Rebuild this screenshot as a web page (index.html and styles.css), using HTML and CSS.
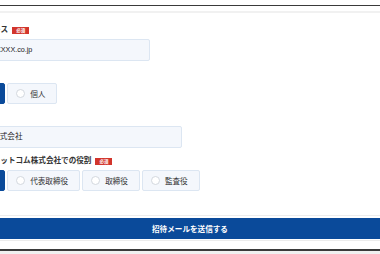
FILE: index.html
```html
<!DOCTYPE html>
<html lang="ja">
    <head>
        <meta charset="UTF-8">
        <link rel="stylesheet" href="styles.css">
    </head>
    <body>
        <div class="topbar"></div>
        <div class="panel">
            <!-- the form starts left of the window, so only part of it shows -->
            <form class="form" action="#">
                <div class="field">
                    <div class="label">メールアドレス<span class="badge">必須</span></div>
                    <div class="input email">XXXX.co.jp</div>
                </div>
                <div class="field">
                    <div class="label">区分</div>
                    <div class="choices">
                        <div class="choice selected"><span class="dot"></span>法人</div>
                        <div class="choice"><span class="dot"></span>個人</div>
                    </div>
                </div>
                <div class="field">
                    <div class="label">会社名</div>
                    <div class="input wide">サンプル株式会社</div>
                </div>
                <div class="field">
                    <div class="label">ネクスト・ドットコム株式会社での役割<span class="badge">必須</span></div>
                    <div class="choices">
                        <div class="choice selected"><span class="dot"></span>社員</div>
                        <div class="choice"><span class="dot"></span>代表取締役</div>
                        <div class="choice"><span class="dot"></span>取締役</div>
                        <div class="choice"><span class="dot"></span>監査役</div>
                    </div>
                </div>
            </form>
            <div class="footer">
                <button class="submit" type="button">招待メールを送信する</button>
            </div>
        </div>
        <div class="bottombar"></div>
    </body>
</html>
```

FILE: styles.css
```css
html {
    background-color: #ffffff;
}

body {
    margin: 0;
    width: 380px;
    height: 254px;
    overflow: hidden;
    color: #333333;
    font-family: "Liberation Sans", "Noto Sans CJK JP", sans-serif;
    font-size: 7.6px;
}

.topbar {
    height: 5px;
    border-bottom: 1px solid #3a3a3a;
}

.panel {
    margin-top: 5px;
    border-top: 2px solid #f1f1f1;
}

.form {
    margin-left: -45px;
    padding-top: 11px;
    display: flex;
    flex-direction: column;
    gap: 7px;
}

.label {
    height: 12px;
    line-height: 12px;
    margin-bottom: 3px;
    font-weight: bold;
    white-space: nowrap;
    display: flex;
    align-items: center;
}

.badge {
    display: inline-block;
    width: 17px;
    height: 7px;
    line-height: 7px;
    margin-left: 4px;
    background-color: #d2352c;
    color: #ffffff;
    font-size: 4.5px;
    text-align: center;
}

.input {
    box-sizing: border-box;
    width: 195px;
    height: 22px;
    line-height: 20px;
    padding: 0 6px;
    border: 1px solid #dce6f2;
    border-radius: 2px;
    background-color: #f4f7fc;
    color: #222222;
    white-space: nowrap;
}

/* the start of the address is cut off by the window edge */
.input.email {
    padding-left: 40px;
    font-size: 7.2px;
}

.input.wide {
    width: 227px;
}

.choices {
    display: flex;
    gap: 2px;
}

.choice {
    box-sizing: border-box;
    height: 21px;
    padding: 0 11px 0 8px;
    display: flex;
    align-items: center;
    gap: 5px;
    border: 1px solid #dce6f2;
    border-radius: 2px;
    background-color: #f4f7fc;
    white-space: nowrap;
}

.choice.selected {
    background-color: #0a4a9a;
    border-color: #0a4a9a;
    color: #ffffff;
}

.dot {
    box-sizing: border-box;
    width: 9px;
    height: 9px;
    border: 1px solid #d3d8df;
    border-radius: 50%;
    background-color: #ffffff;
}

.footer {
    margin-top: 24px;
    padding: 2px 0 1px;
    border-top: 1px solid #ececec;
    border-bottom: 1px solid #ececec;
}

.submit {
    display: block;
    width: 100%;
    height: 21px;
    border: none;
    background-color: #0a4a9a;
    color: #ffffff;
    font-family: "Liberation Sans", "Noto Sans CJK JP", sans-serif;
    font-size: 7.6px;
    font-weight: bold;
}

.bottombar {
    margin-top: 8px;
    height: 6px;
    border-top: 2px solid #3a3a3a;
    background-color: #f0f0f0;
}
```
